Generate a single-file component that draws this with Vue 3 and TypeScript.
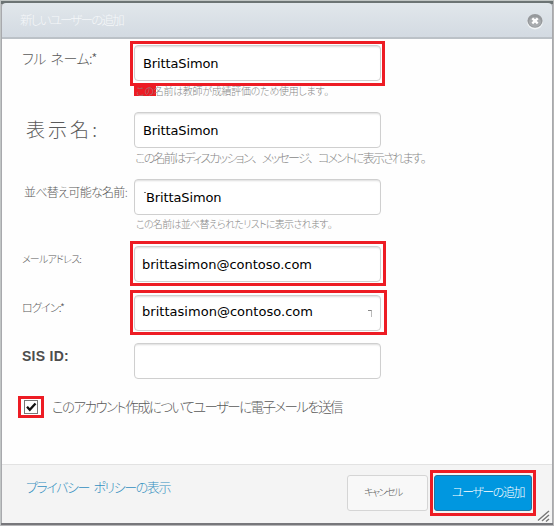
<script setup lang="ts">
interface Field {
  id: string
  label: string
  labelWidth: number
  value: string
  valueWidth: number
  hint?: string
  hintWidth?: number
  marked?: boolean
}

const fields: Field[] = [
  { id: 'full', label: 'フル ネーム:*', labelWidth: 75, value: 'BrittaSimon', valueWidth: 75.5, hint: 'この名前は教師が成績評価のため使用します。', hintWidth: 200, marked: true },
  { id: 'display', label: '表示名:', labelWidth: 74, value: 'BrittaSimon', valueWidth: 75.5, hint: 'この名前はディスカッション、メッセージ、コメントに表示されます。', hintWidth: 296 },
  { id: 'sortable', label: '並べ替え可能な名前:', labelWidth: 103, value: 'BrittaSimon', valueWidth: 75.5, hint: 'この名前は並べ替えられたリストに表示されます。', hintWidth: 201 },
  { id: 'email', label: 'メールアドレス:', labelWidth: 59, value: 'brittasimon@contoso.com', valueWidth: 170, marked: true },
  { id: 'login', label: 'ログイン:*', labelWidth: 42, value: 'brittasimon@contoso.com', valueWidth: 171, marked: true },
  { id: 'sis', label: 'SIS ID:', labelWidth: 47, value: '', valueWidth: 0 },
]

// Splits a text so that its commas, full stops and label marks can be spaced on their own.
const segments = (text: string): string[] => text.split(/([、。])/).filter(Boolean)

// Tracks a single-line text so that it fills the given width.
const vFit = {
  mounted(el: HTMLElement, binding: { value?: number }) {
    const count = (el.textContent ?? '').length
    if (!count || !binding.value) return
    const natural = el.getBoundingClientRect().width
    el.style.letterSpacing = `${(binding.value - natural) / count}px`
  },
}
</script>

<template>
  <div class="window">
    <header class="titlebar">
      <h1 v-fit="103">新しいユーザーの追加</h1>
      <svg class="close" width="18" height="18" viewBox="0 0 18 18">
        <ellipse cx="9" cy="10.2" rx="7.8" ry="7.2" fill="#f2f5f7" />
        <ellipse cx="9" cy="8.8" rx="7.6" ry="6.9" fill="#96999c" />
        <ellipse cx="9" cy="10" rx="6" ry="5" fill="#a9acaf" />
        <path d="M6.3 6.4L11.7 11.4M11.7 6.4L6.3 11.4" stroke="#fff" stroke-width="2.3" />
      </svg>
    </header>
    <main class="form">
      <div v-for="f in fields" :key="f.id" class="row" :class="f.id">
        <label><span v-fit="f.labelWidth">{{ f.label }}</span></label>
        <div class="control">
          <div class="input">
            <i v-if="f.id === 'sortable'" class="tick"></i>
            <span v-fit="f.valueWidth" class="value">{{ f.value }}</span>
            <i v-if="f.id === 'login'" class="remnant"></i>
            <div v-if="f.marked" class="mark"></div>
          </div>
          <p v-if="f.hint" class="hint"><span v-fit="f.hintWidth"><template v-for="(s, i) in segments(f.hint)" :key="i"><b v-if="s === '、' || s === '。'">{{ s }}</b><template v-else>{{ s }}</template></template></span></p>
        </div>
      </div>
      <div class="notify">
        <div class="checkmark">
          <svg width="14" height="14" viewBox="0 0 14 14">
            <rect x=".5" y=".5" width="13" height="13" fill="#fff" stroke="#777" />
            <path d="M3 6.7L5.8 9.8L11.5 3.5" fill="none" stroke="#111" stroke-width="2.3" />
          </svg>
        </div>
        <span v-fit="290">このアカウント作成についてユーザーに電子メールを送信</span>
      </div>
    </main>
    <footer class="footer">
      <a><span v-fit="144">プライバシー ポリシーの表示</span></a>
      <div class="btn cancel"><span v-fit="38">キャンセル</span></div>
      <div class="btn primary">
        <span v-fit="72">ユーザーの追加</span>
        <div class="mark"></div>
      </div>
      <svg class="grip" width="13" height="12" viewBox="0 0 13 12">
        <path d="M1 10.5L12 1M5 11L12 5M9 11.5L12 9" stroke="#fff" stroke-width="1.5" transform="translate(0 1)" />
        <path d="M1 10.5L12 1M5 11L12 5M9 11.5L12 9" stroke="#777" stroke-width="1.5" />
      </svg>
    </footer>
  </div>
</template>

<style>
body { margin: 0; background: #bfc3c3; }
</style>

<style scoped>
.window {
  box-sizing: border-box;
  width: 554px;
  height: 526px;
  padding: 1px;
  display: flex;
  flex-direction: column;
  border: 1px solid #c1c5c5;
  border-top-color: #c1c6c4;
  border-right-color: #b5b5b5;
  border-bottom-color: #b6b6b8;
  background: linear-gradient(#6c7474, #6c7474) 0 0 / 100% 3px no-repeat, linear-gradient(#77777b, #77777b) 0 100% / 100% 2px no-repeat, #a8a9ad;
  font-family: "Noto Sans CJK JP", sans-serif;
  font-feature-settings: "palt";
  font-weight: 300;
  color: #5a5a5a;
}
span, h1 { display: inline-block; white-space: nowrap; }
b { font-weight: inherit; font-feature-settings: normal; }
.titlebar {
  box-sizing: border-box;
  height: 36px;
  flex: none;
  margin-top: 1px;
  padding: 0 8px 0 18px;
  display: flex;
  align-items: center;
  justify-content: space-between;
  border-bottom: 2px solid #bbc1c7;
  border-radius: 4px 4px 0 0;
  background: linear-gradient(#e1e7eb, #d3dae2);
}
h1 { margin: 0; font-size: 12.5px; line-height: 18px; font-weight: 300; color: #f5f7f9; }
.close { margin-top: 1px; }
.form { flex: 1; padding: 6px 18px 0 20px; background: #fefefe; }
.row { display: grid; grid-template-columns: 112px 1fr; height: 67px; }
.row.email { height: 49px; }
.row.login { height: 48px; }
.row.sis { height: 51px; }
label { display: block; line-height: 20px; }
.full label { font-size: 14px; padding-top: 3px; word-spacing: 2px; }
.display label { font-size: 19px; padding: 7px 0 0 4px; }
.sortable label { font-size: 12px; padding: 3px 0 0 2px; }
.email label { font-size: 10px; padding-top: 3px; }
.login label { font-size: 11px; padding-top: 2px; }
.sis label { font: bold 14px/20px "Liberation Sans", sans-serif; color: #4d4d4d; padding-top: 3px; }
.input {
  box-sizing: border-box;
  position: relative;
  width: 247px;
  height: 36px;
  padding: 0 8px;
  display: flex;
  align-items: center;
  border: 1px solid #cfcfcf;
  border-radius: 4px;
  background: #fff;
  box-shadow: inset 0 2px 2px -1px #ddd;
  color: #000;
  font: 400 13px/18px "DejaVu Sans", sans-serif;
}
.value { padding-top: 1px; }
.email .input, .login .input { padding-left: 7px; }
.login .value { padding: 0 0 2px; }
.sortable .input { padding-left: 11px; }
.tick { position: absolute; left: 9px; top: 12px; width: 2px; height: 1px; background: #777; }
.remnant { position: absolute; left: 233px; top: 14px; width: 4px; height: 7px; box-sizing: border-box; border-top: 1px solid #888; border-right: 1px solid #bbb; }
.mark { position: absolute; border: 3px solid #ed1c24; }
.full .mark { inset: -5px -5px -6px; }
.email .mark { inset: -6px -6px -5px -5px; }
.login .mark { inset: -6px -7px -5px -5px; }
.hint { margin: 0; padding-left: 2px; height: 20px; line-height: 20px; font-size: 10px; color: #888; }
.full .hint span {
  height: 10px;
  line-height: 10px;
  padding-top: 1px;
  background: linear-gradient(90deg, #ed1c24 22px, transparent 22px);
  margin-left: -2px;
  padding-left: 2px;
}
.full .hint { line-height: 10px; padding-top: 4px; }
.display .hint { font-size: 12px; padding-left: 1px; line-height: 19px; }
.sortable .hint { line-height: 17px; }
.notify { display: flex; align-items: center; margin-left: -4px; font-size: 13.5px; line-height: 20px; height: 22px; padding-top: 2px; gap: 8px; }
.notify > span { margin-top: -3px; }
.checkmark { box-sizing: border-box; width: 26px; height: 22px; border: 3px solid #ed1c24; display: grid; place-items: center; background: #fff; }
.footer {
  box-sizing: border-box;
  height: 59px;
  flex: none;
  position: relative;
  padding: 10px 20px 0 24px;
  display: flex;
  align-items: flex-start;
  border-top: 1px solid #e2e2e2;
  background: #f4f4f4;
  margin-bottom: 1px;
}
a { flex: 1; font-size: 13px; line-height: 23px; color: #3590c0; word-spacing: 3px; }
.btn { box-sizing: border-box; height: 36px; display: flex; align-items: center; border-radius: 3px; }
.cancel { width: 81px; padding-left: 16px; margin-right: 6px; border: 1px solid #d5d5d5; background: #f8f8f8; font-size: 10px; }
.cancel span, .primary span { margin-top: -3px; }
.primary { position: relative; width: 98px; padding-left: 17px; border: 1px solid #23749e; background: #0097e0; color: #fff; font-size: 12px; }
.primary .mark { inset: -6px -5px -6px -5px; }
.grip { position: absolute; right: 2px; bottom: 1px; }
</style>
